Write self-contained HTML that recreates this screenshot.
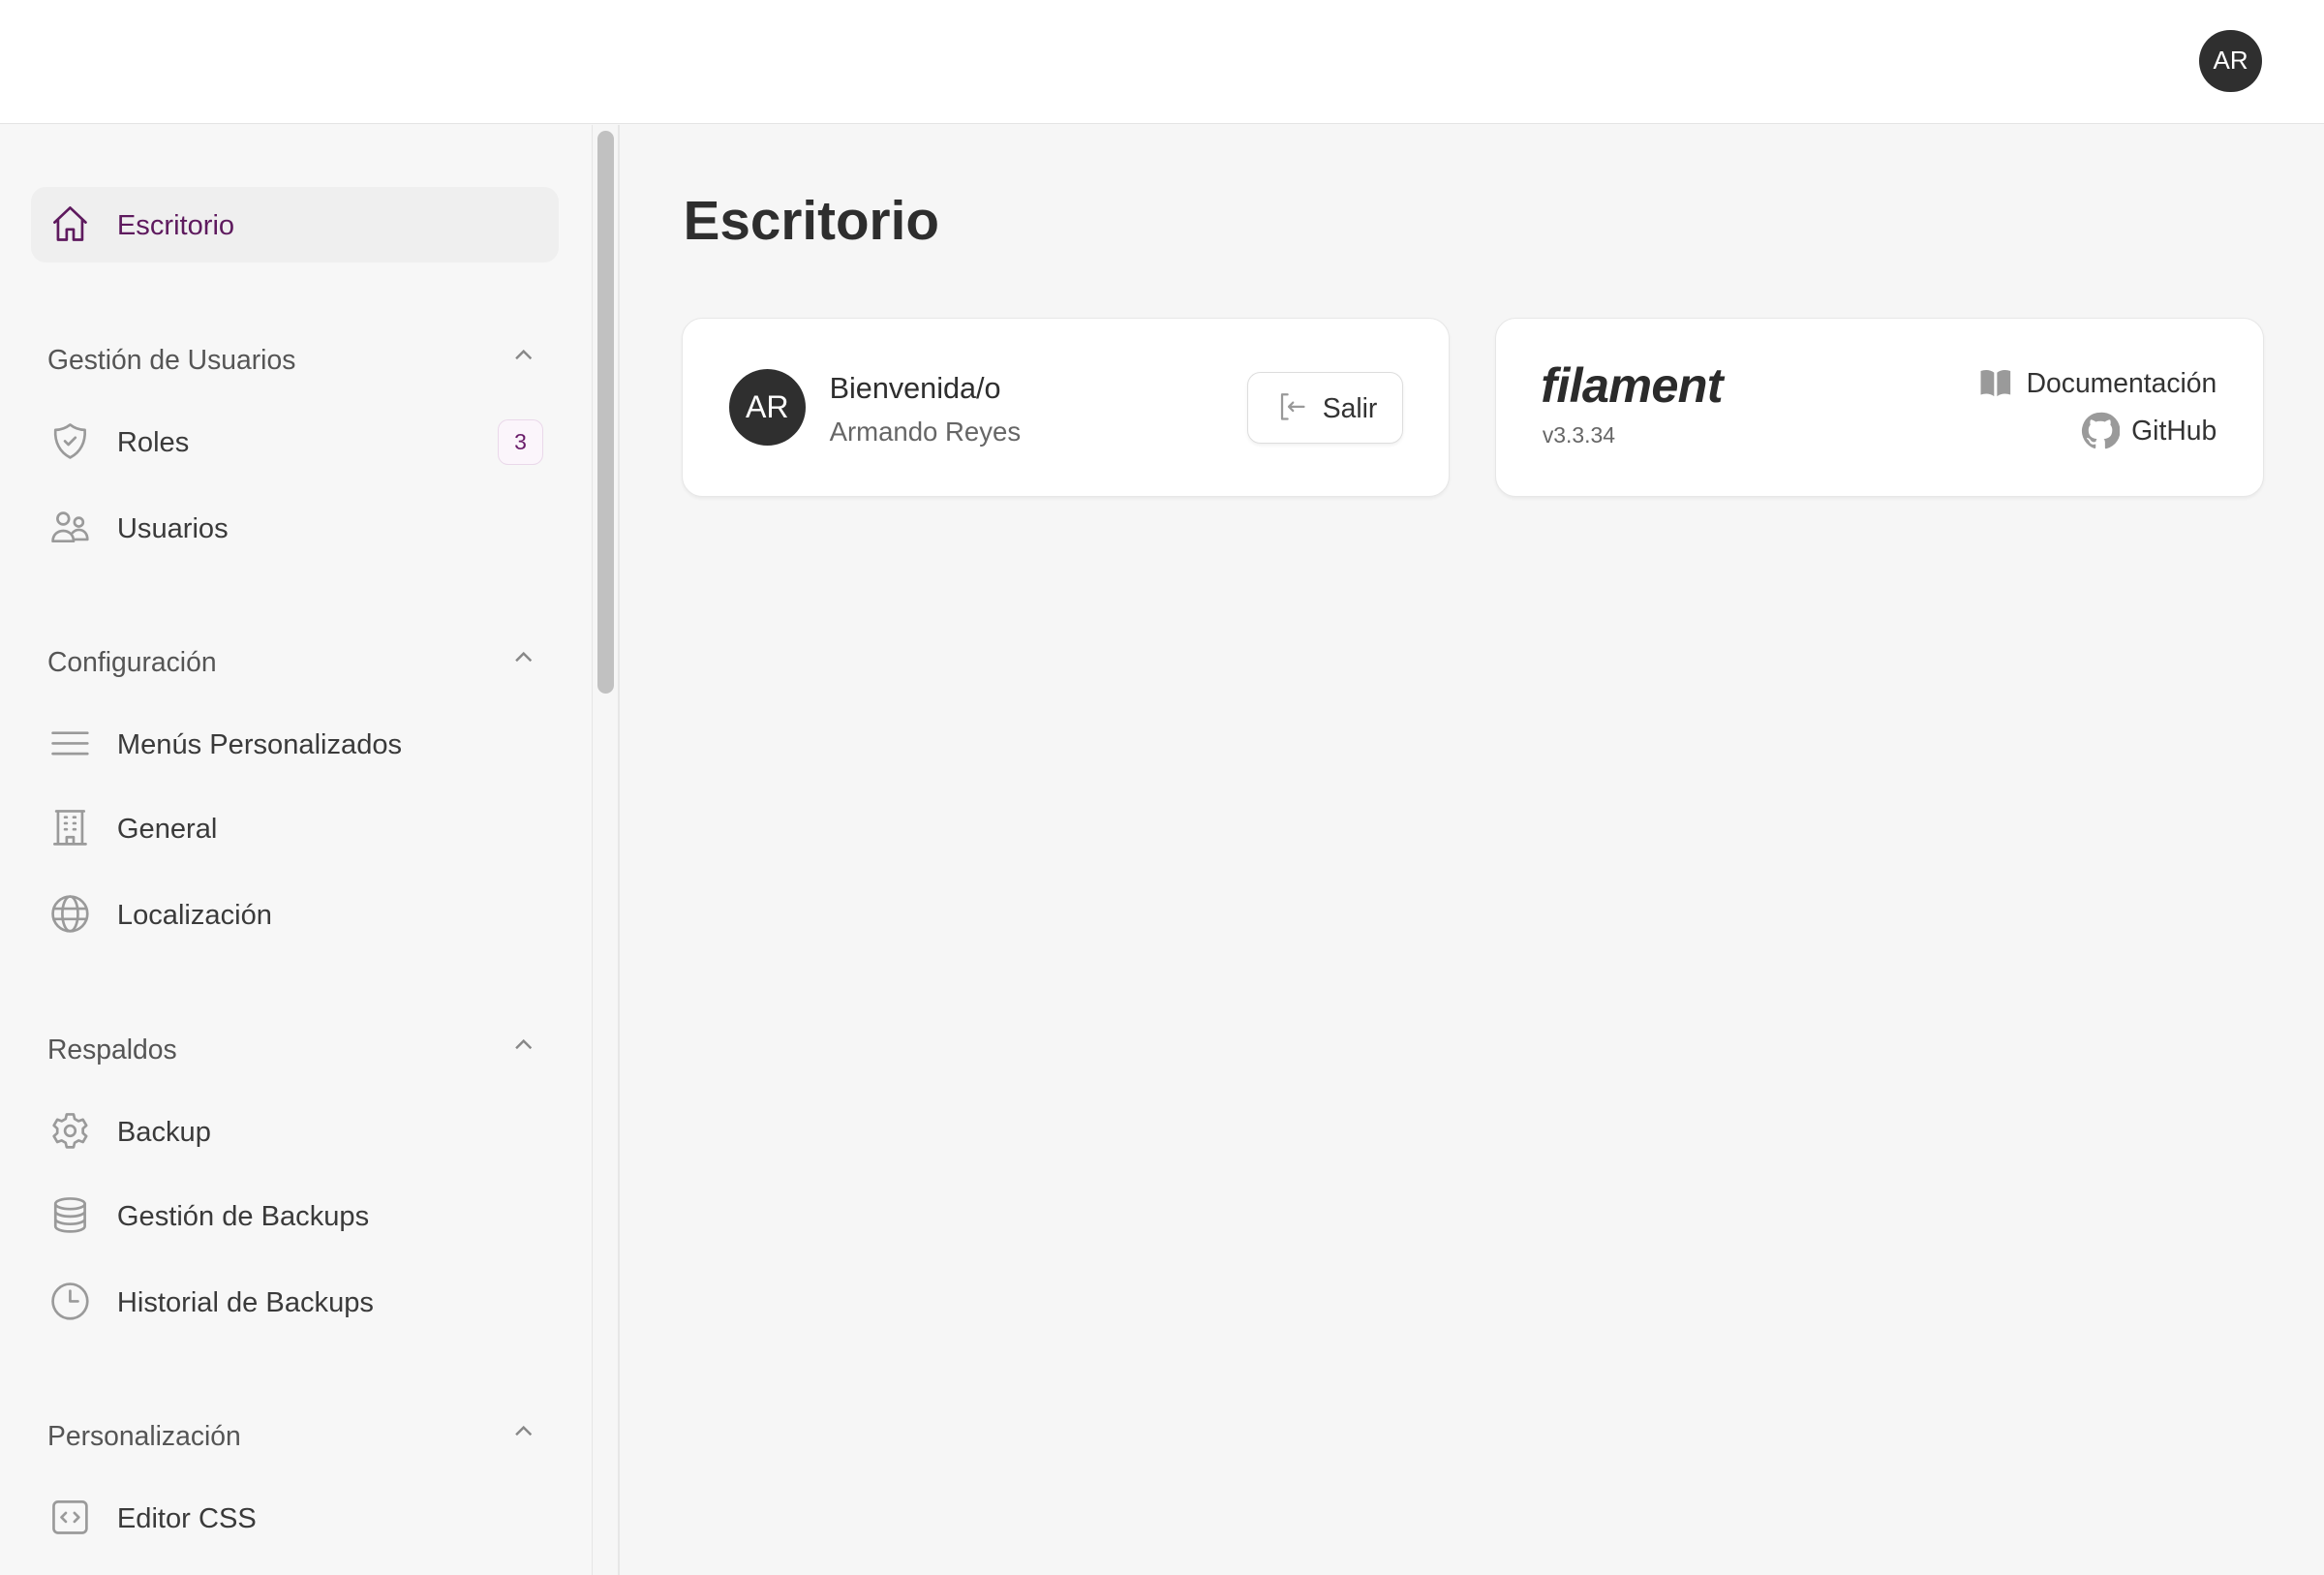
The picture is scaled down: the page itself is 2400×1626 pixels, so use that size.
<!DOCTYPE html>
<html><head><meta charset="utf-8"><style>
html,body{margin:0;padding:0;width:2400px;height:1626px;overflow:hidden;background:#f6f6f6}
#w{zoom:1.5306;width:1568px;height:1063px;position:relative;font-family:"Liberation Sans","DejaVu Sans",sans-serif;color:#333}
.top{position:absolute;left:0;top:0;width:1568px;height:83px;background:#fff;border-bottom:1px solid #e4e4e4}
.av{position:absolute;border-radius:50%;background:#2f2f2f;color:#fff;display:flex;align-items:center;justify-content:center}
.side{position:absolute;left:0;top:84px;width:399px;height:980px;background:#f7f7f7;border-right:1px solid #e6e6e6}
.sb{position:absolute;left:403px;top:88px;width:11px;height:380px;background:#c1c1c1;border-radius:6px}
.mainb{position:absolute;left:417px;top:84px;width:1px;height:980px;background:#e6e6e6}
.it{position:absolute;left:21px;width:356px;height:51px;display:flex;align-items:center;font-size:19px;color:#3a3a3a}
.it svg{position:absolute;left:12px;width:28px;height:28px;fill:none;stroke:#9a9a9a;stroke-width:1.5;stroke-linecap:round;stroke-linejoin:round}
.it span{position:absolute;left:58px;top:16px}
.grp{position:absolute;left:32px;font-size:18.5px;color:#555;margin-top:2px}
.chev{position:absolute;left:346px;width:14px;height:10px}
.card{position:absolute;top:214px;height:120px;width:517px;background:#fff;border:1px solid #e7e7e7;border-radius:14px;box-shadow:0 1px 2px rgba(0,0,0,.05)}
</style></head><body><div id="w">
<div class="top"><div class="av" style="left:1484px;top:20px;width:42px;height:42px;font-size:17px">AR</div></div>
<div class="side">
<div class="it" style="top:42px;background:#efefef;border-radius:10px;color:#5e1a5e"><svg viewBox="0 0 24 24" style="stroke:#5e1a5e"><path d="M3 11 12 2.5 21 11M5 9.5V21h5v-6h4v6h5V9.5"/></svg><span>Escritorio</span></div>
<div class="grp" style="top:146px">Gestión de Usuarios</div>
<svg class="chev" style="top:150px" viewBox="0 0 14 10"><path d="M2 8 7 3l5 5" fill="none" stroke="#888" stroke-width="1.6"/></svg>
<div class="it" style="top:188px"><svg viewBox="0 0 24 24"><path d="M12 2.5c2.5 2 5.5 3 8.5 3 .5 7-2.5 13-8.5 16-6-3-9-9-8.5-16 3 0 6-1 8.5-3z"/><path d="m9 12 2 2 4-4"/></svg><span>Roles</span>
<div style="position:absolute;left:315px;top:11px;width:29px;height:29px;border:1px solid #ead8ea;background:#fbf5fb;border-radius:7px;color:#6a1d6a;font-size:15px;display:flex;align-items:center;justify-content:center">3</div></div>
<div class="it" style="top:246px"><svg viewBox="0 0 24 24"><circle cx="8" cy="7" r="3.3"/><circle cx="17" cy="9" r="2.5"/><path d="M2 20c0-4 3-6 6-6s6 2 6 6zM13.5 15c1-1 2.3-1.6 3.5-1.6 2.8 0 5 2 5 5.6h-7"/></svg><span>Usuarios</span></div>
<div class="grp" style="top:350px">Configuración</div>
<svg class="chev" style="top:354px" viewBox="0 0 14 10"><path d="M2 8 7 3l5 5" fill="none" stroke="#888" stroke-width="1.6"/></svg>
<div class="it" style="top:392px"><svg viewBox="0 0 24 24"><path d="M2 6h20M2 12h20M2 18h20"/></svg><span>Menús Personalizados</span></div>
<div class="it" style="top:449px"><svg viewBox="0 0 24 24"><path d="M4 2.5h16M5 2.5v19M19 2.5v19M3 21.5h18M10 21.5v-4h4v4M9 6h1M14 6h1M9 9.5h1M14 9.5h1M9 13h1M14 13h1"/></svg><span>General</span></div>
<div class="it" style="top:507px"><svg viewBox="0 0 24 24"><circle cx="12" cy="12" r="10"/><ellipse cx="12" cy="12" rx="4.5" ry="10"/><path d="M2.5 9h19M2.5 15h19"/></svg><span>Localización</span></div>
<div class="grp" style="top:611px">Respaldos</div>
<svg class="chev" style="top:615px" viewBox="0 0 14 10"><path d="M2 8 7 3l5 5" fill="none" stroke="#888" stroke-width="1.6"/></svg>
<div class="it" style="top:653px"><svg viewBox="0 0 24 24"><path d="M10 2.5h4l.6 2.6 2.3 1.3 2.5-.9 2 3.4-2 1.8v2.6l2 1.8-2 3.4-2.5-.9-2.3 1.3-.6 2.6h-4l-.6-2.6-2.3-1.3-2.5.9-2-3.4 2-1.8v-2.6l-2-1.8 2-3.4 2.5.9 2.3-1.3z"/><circle cx="12" cy="12" r="3"/></svg><span>Backup</span></div>
<div class="it" style="top:710px"><svg viewBox="0 0 24 24"><ellipse cx="12" cy="5.5" rx="8.5" ry="3"/><path d="M3.5 5.5v13c0 1.7 3.8 3 8.5 3s8.5-1.3 8.5-3v-13M3.5 9.8c0 1.7 3.8 3 8.5 3s8.5-1.3 8.5-3M3.5 14.2c0 1.7 3.8 3 8.5 3s8.5-1.3 8.5-3"/></svg><span>Gestión de Backups</span></div>
<div class="it" style="top:768px"><svg viewBox="0 0 24 24"><circle cx="12" cy="12" r="10"/><path d="M12 6v6h4.5"/></svg><span>Historial de Backups</span></div>
<div class="grp" style="top:872px">Personalización</div>
<svg class="chev" style="top:876px" viewBox="0 0 14 10"><path d="M2 8 7 3l5 5" fill="none" stroke="#888" stroke-width="1.6"/></svg>
<div class="it" style="top:914px"><svg viewBox="0 0 24 24"><rect x="2.5" y="3" width="19" height="18" rx="2.5"/><path d="m9.5 9.5-2.5 2.5 2.5 2.5M14.5 9.5l2.5 2.5-2.5 2.5"/></svg><span>Editor CSS</span></div>
</div>
<div class="sb"></div><div class="mainb"></div>
<div style="position:absolute;left:461px;top:128px;font-size:37px;font-weight:bold;color:#2e2e2e">Escritorio</div>
<div class="card" style="left:460px">
<div class="av" style="left:31px;top:34px;width:52px;height:52px;font-size:21px">AR</div>
<div style="position:absolute;left:99px;top:36px;font-size:20px;color:#2e2e2e">Bienvenida/o</div>
<div style="position:absolute;left:99px;top:66px;font-size:18px;color:#666">Armando Reyes</div>
<div style="position:absolute;left:381px;top:36px;width:104px;height:47px;border:1px solid #ddd;border-radius:9px;box-shadow:0 1px 2px rgba(0,0,0,.06)">
<svg style="position:absolute;left:18px;top:12px" width="22" height="22" viewBox="0 0 24 24" fill="none" stroke="#999" stroke-width="1.6" stroke-linecap="round" stroke-linejoin="round"><path d="M9 3H5v18h4M21 12H10m3-3-3 3 3 3"/></svg>
<span style="position:absolute;left:50px;top:13px;font-size:18.5px;color:#333">Salir</span></div>
</div>
<div class="card" style="left:1009px">
<div style="position:absolute;left:30px;top:26px;font-size:33px;font-weight:bold;font-style:italic;color:#2b2b2b;letter-spacing:-.5px">filament</div>
<div style="position:absolute;left:31px;top:70px;font-size:15px;color:#666">v3.3.34</div>
<div style="position:absolute;right:31px;top:33px;font-size:18.5px;color:#333;display:flex;align-items:center;gap:10px"><svg width="22" height="20" viewBox="0 0 22 20"><path d="M1 2c3-1 6-1 9 1v16c-3-2-6-2-9-1zM12 3c3-2 6-2 9-1v16c-3-1-6-1-9 1z" fill="#9a9a9a"/></svg>Documentación</div>
<div style="position:absolute;right:31px;top:63px;font-size:18.5px;color:#333;display:flex;align-items:center;gap:8px"><svg width="26" height="26" viewBox="0 0 24 24"><path fill="#9a9a9a" d="M12 .5a11.5 11.5 0 0 0-3.6 22.4c.6.1.8-.3.8-.6v-2c-3.2.7-3.900-1.5-3.9-1.5-.5-1.3-1.3-1.7-1.3-1.7-1-.7.1-.7.1-.7 1.2.1 1.8 1.2 1.8 1.2 1 1.8 2.7 1.3 3.4 1 .1-.8.4-1.3.7-1.600-2.6-.3-5.3-1.3-5.3-5.700 0-1.3.5-2.3 1.2-3.1-.1-.3-.5-1.5.1-3.1 0 0 1-.3 3.2 1.2a11 11 0 0 1 5.8 0c2.2-1.5 3.2-1.2 3.2-1.2.6 1.6.2 2.8.1 3.1.7.8 1.2 1.8 1.2 3.1 0 4.4-2.7 5.4-5.3 5.7.4.4.8 1.1.8 2.2v3.3c0 .3.2.7.8.6A11.5 11.5 0 0 0 12 .5z"/></svg>GitHub</div>
</div>
</div></body></html>
